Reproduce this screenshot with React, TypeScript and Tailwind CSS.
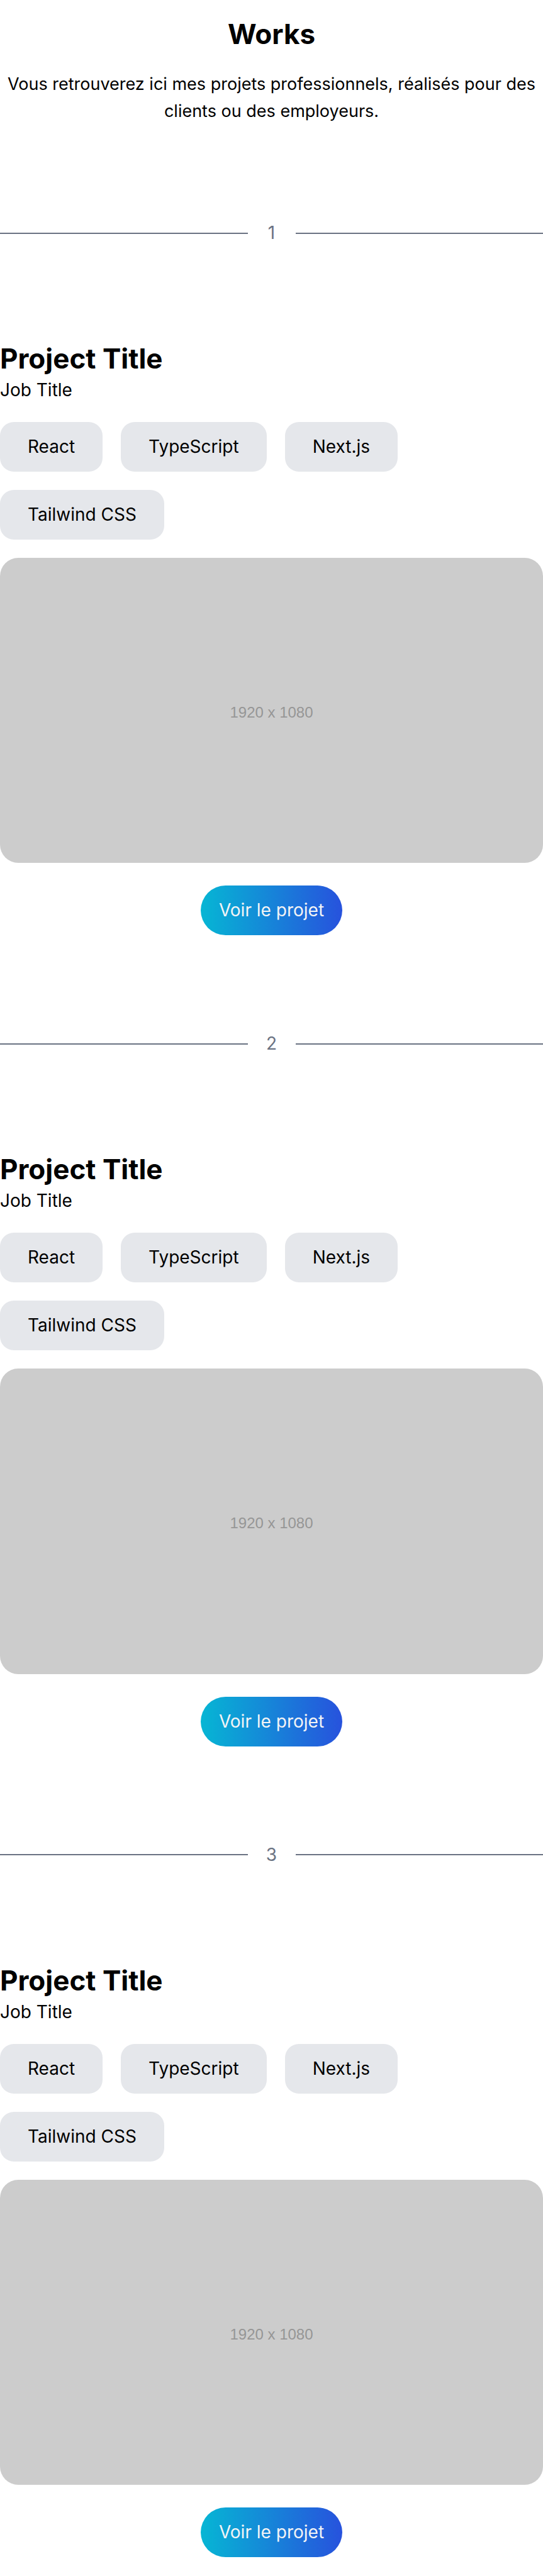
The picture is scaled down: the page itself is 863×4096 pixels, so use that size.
import React from "react";

type Project = { id: number; title: string; job: string; stack: string[] };

const STACK = ["React", "TypeScript", "Next.js", "Tailwind CSS"];

const PROJECTS: Project[] = [1, 2, 3].map((id) => ({
  id,
  title: "Project Title",
  job: "Job Title",
  stack: STACK,
}));

function Divider({ label }: { label: number }) {
  return (
    <div className="flex items-center gap-[29px] text-gray-500">
      <span className="h-[2px] flex-1 bg-gray-500" />
      <span className="w-[18px] text-center">{label}</span>
      <span className="h-[2px] flex-1 bg-gray-500" />
    </div>
  );
}

function ProjectCard({ project }: { project: Project }) {
  return (
    <article className="flex flex-col">
      <h2 className="text-[44px] leading-[58px] font-bold">{project.title}</h2>
      <p>{project.job}</p>
      <ul className="mt-[29px] flex flex-wrap gap-[29px]">
        {project.stack.map((name) => (
          <li key={name} className="rounded-[22px] bg-gray-200 px-[44px] py-[18px]">
            {name}
          </li>
        ))}
      </ul>
      <div className="mt-[29px] flex aspect-video w-full items-center justify-center rounded-[29px] bg-[#cccccc] pt-[5px] font-['Liberation_Sans',sans-serif] text-[24px] text-[#969696]">
        1920 x 1080
      </div>
      <a
        href="#"
        className="mt-[36px] self-center rounded-full bg-linear-to-r/srgb from-[#06b6d4] to-[#2752dd] px-[29px] py-[18px] text-gray-100"
      >
        Voir le projet
      </a>
    </article>
  );
}

export default function App() {
  return (
    <main className="bg-white pt-[25px] pb-[29px] font-['Inter',sans-serif] text-[28px] leading-[43px] text-black">
      <header className="text-center">
        <h1 className="text-[44px] leading-[58px] font-bold">Works</h1>
        <p className="mt-[29px] text-[27px] leading-[43px]">
          Vous retrouverez ici mes projets professionnels, réalisés pour des
          clients ou des employeurs.
        </p>
      </header>
      {PROJECTS.map((project) => (
        <section key={project.id} className="flex flex-col gap-[149px] pt-[151px]">
          <Divider label={project.id} />
          <ProjectCard project={project} />
        </section>
      ))}
    </main>
  );
}
